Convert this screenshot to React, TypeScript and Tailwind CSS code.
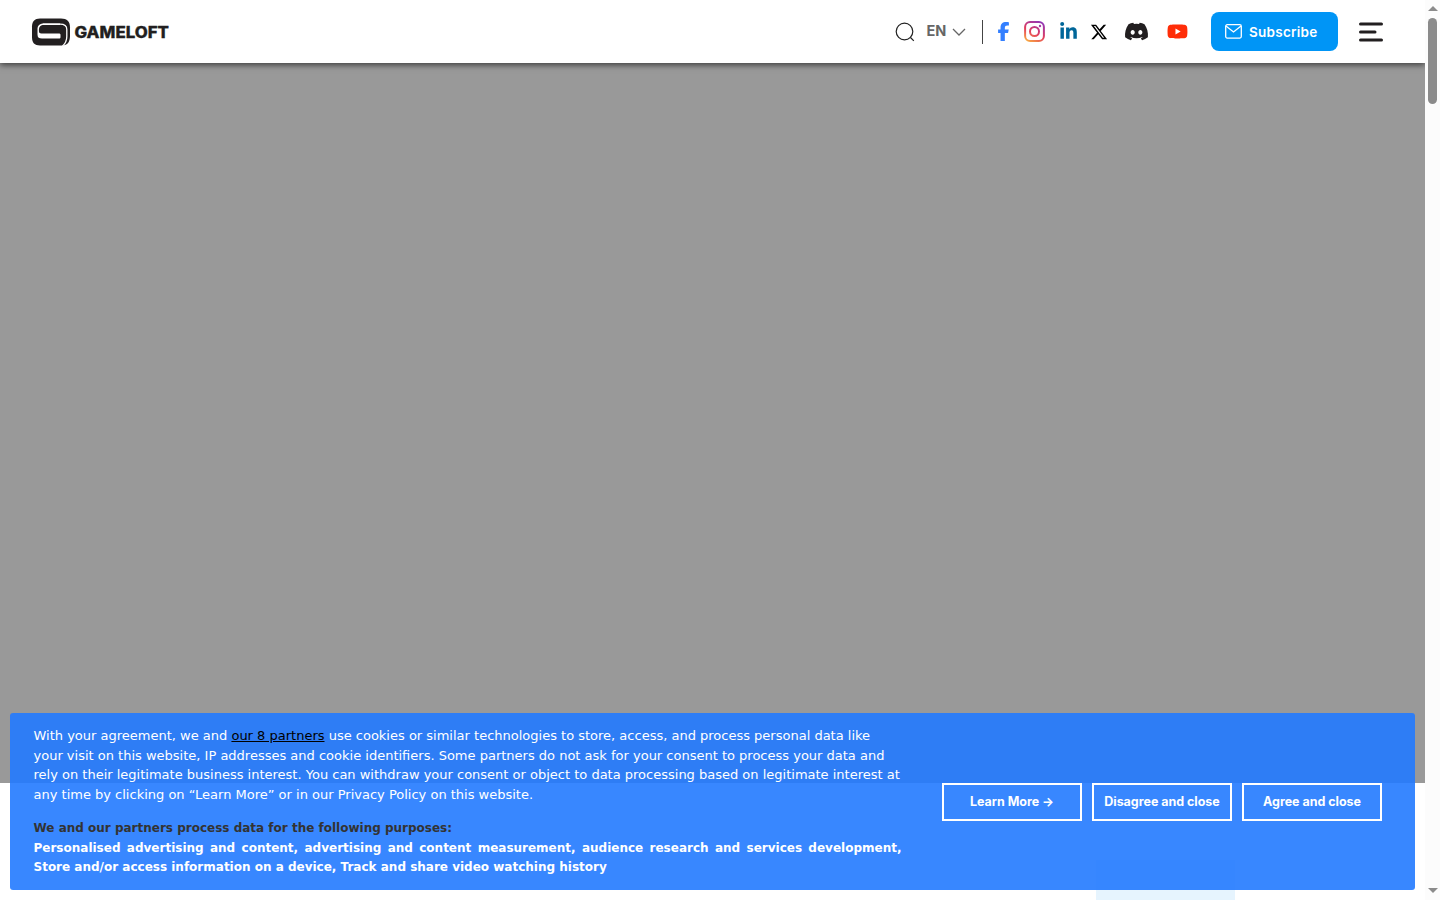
import { FaDiscord, FaFacebookF, FaLinkedinIn, FaXTwitter, FaYoutube } from "react-icons/fa6";

const NavLogo = () => (
  <svg width="140" height="30" viewBox="0 0 140 30" className="shrink-0">
    <path
      d="M9 1.500H30C36 1.500 39 4.500 39 10.500V18.500C39 25 36.500 28.500 31 28.500H9C3.500 28.500 1 25.500 1 20.500V9.500C1 4.500 3.500 1.500 9 1.500Z"
      fill="#221f20"
    />
    <path d="M12 7.200H29C34 7.200 35.800 9 35.800 12.500V19.500C35.800 24 34.500 26.500 31.500 29" fill="none" stroke="#fff" strokeWidth="1.3" />
    <path
      d="M29 6.550H13C8 6.550 6.500 9 6.500 12.500V17.500C6.500 20.500 8 21.500 11 21.500H28C29 21.500 29.500 21 29.500 20V18C29.500 17 29 16.500 28 16.500H10.500C8.300 16.500 7.800 15.500 7.900 13C8 9.500 9.500 7.900 13 7.900H29Z"
      fill="#fff"
    />
    <text
      x="43.500"
      y="20.800"
      textLength="94.500"
      lengthAdjust="spacingAndGlyphs"
      fill="#221f20"
      stroke="#221f20"
      strokeWidth="0.3"
      className="font-['Inter',sans-serif] text-[15.5px] font-extrabold"
    >
      GAMELOFT
    </text>
  </svg>
);

const InstagramIcon = () => (
  <svg width="21" height="21" viewBox="0 0 21 21" fill="none" className="ml-[13.5px]">
    <defs>
      <linearGradient id="instagram" x1="4" y1="21" x2="15" y2="0" gradientUnits="userSpaceOnUse">
        <stop stopColor="#f9ae43" />
        <stop offset="0.45" stopColor="#e33e5c" />
        <stop offset="1" stopColor="#9136b5" />
      </linearGradient>
    </defs>
    <rect x="1.1" y="1.1" width="18.800" height="18.800" rx="5" stroke="url(#instagram)" strokeWidth="2" />
    <circle cx="10.500" cy="10.500" r="4.500" stroke="url(#instagram)" strokeWidth="2" />
    <circle cx="16" cy="5" r="1.200" fill="#a63aa7" />
  </svg>
);

const Header = () => (
  <header className="relative z-10 flex h-[63px] shrink-0 items-center bg-white pl-[31px] shadow-[0_2px_6px_rgba(0,0,0,0.6)]">
    <NavLogo />
    <div className="ml-auto flex items-center pr-[41px]">
      <svg width="20" height="20" viewBox="0 0 20 20" fill="none" stroke="#222" strokeWidth="1.2">
        <circle cx="9.500" cy="9.500" r="8.300" />
        <path d="m15.500 15.500 3.300 3.300" />
      </svg>
      <button className="ml-[11px] flex items-center text-[#666]">
        <span className="w-[21px] pb-px text-[14.5px] leading-5 font-bold whitespace-nowrap">EN</span>
        <svg width="14" height="8" viewBox="0 0 14 8" fill="none" stroke="#666" strokeWidth="1.3" className="ml-[5px]">
          <path d="m1 1 6 6 6-6" />
        </svg>
      </button>
      <div className="mr-[14px] ml-4 h-6 w-px bg-[#444]" />
      <FaFacebookF className="h-[19px] w-[13px] text-[#337fff]" />
      <InstagramIcon />
      <FaLinkedinIn className="ml-[14.5px] size-[19px] text-[#006699]" />
      <FaXTwitter className="ml-3 size-[18px] text-black" />
      <FaDiscord className="ml-4 size-[25px] text-[#221f20]" />
      <FaYoutube className="ml-[17.5px] size-[21px] text-[#ff2d08]" />
      <button className="ml-[23.5px] flex h-[39px] w-[127px] items-center rounded-[8px] bg-[#0095f6] pl-[13.5px] text-white">
        <svg width="17" height="15" viewBox="0 0 17 15" fill="none" stroke="currentColor" strokeWidth="1.3">
          <rect x="0.700" y="0.700" width="15.600" height="13.400" rx="1.500" />
          <path d="m1 2 7.500 6L16 2" />
        </svg>
        <span className="ml-[7.5px] pt-px text-[13.5px] font-semibold tracking-[0.25px]">Subscribe</span>
      </button>
      <svg width="26" height="22" viewBox="0 0 26 22" stroke="#221f20" strokeWidth="3" strokeLinecap="round" className="ml-5">
        <path d="M2.500 3h21M2.500 11H17M2.500 19h21" />
      </svg>
    </div>
  </header>
);

const actions = ["Learn More →", "Disagree and close", "Agree and close"];

const ConsentBanner = () => (
  <section className="absolute top-[713px] left-[10px] z-20 flex h-[177px] w-[1405px] items-center rounded-[3px] bg-[#227aff]/90 pr-[33px] pl-[23.5px] text-white">
    <div className="w-[868px] shrink-0 pt-px font-['DejaVu_Sans',sans-serif] text-[13px] leading-[19.5px]">
      <p>
        With your agreement, we and{" "}
        <a className="text-black underline">our 8 partners</a> use cookies or similar technologies to store, access, and
        process personal data like
        <br />
        your visit on this website, IP addresses and cookie identifiers. Some partners do not ask for your consent to
        process your data and rely on their legitimate business interest. You can withdraw your consent or object to
        data processing based on legitimate interest at any time by clicking on “Learn More” or in our Privacy Policy on
        this website.
      </p>
      <div className="mt-[15px] text-justify text-[12px] font-bold">
        <p className="text-[#333]">We and our partners process data for the following purposes:</p>
        <p>
          Personalised advertising and content, advertising and content measurement, audience research and services
          development, Store and/or access information on a device, Track and share video watching history
        </p>
      </div>
    </div>
    <div className="ml-[40.5px] flex gap-[10px]">
      {actions.map((label) => (
        <button
          key={label}
          className="h-[38px] w-[140px] border-2 border-white pt-px text-[12.5px] font-bold tracking-[-0.03px] whitespace-nowrap"
        >
          {label}
        </button>
      ))}
    </div>
  </section>
);

const Scrollbar = () => (
  <aside className="relative z-20 flex w-[15px] shrink-0 flex-col items-center bg-[#fcfcfc]">
    <svg width="10" height="18" viewBox="0 0 10 18" fill="#8b8b8b">
      <path d="M0 11 5 6l5 5z" />
    </svg>
    <div className="h-[86px] w-[9px] rounded-full bg-[#8b8b8b]" />
    <svg width="10" height="18" viewBox="0 0 10 18" fill="#8b8b8b" className="mt-auto">
      <path d="m0 6 5 5 5-5z" />
    </svg>
  </aside>
);

export default function App() {
  return (
    <div className="relative flex h-[900px] w-[1440px] overflow-hidden bg-white font-['Inter',sans-serif]">
      <div className="flex min-w-0 flex-1 flex-col">
        <Header />
        <main className="flex flex-1 flex-col">
          <div className="h-[720px] bg-[#999]" />
          <div className="flex flex-1 items-end">
            <div className="ml-[1096px] h-[40px] w-[139px] bg-[#e6f4fe]" />
          </div>
        </main>
      </div>
      <Scrollbar />
      <ConsentBanner />
    </div>
  );
}
